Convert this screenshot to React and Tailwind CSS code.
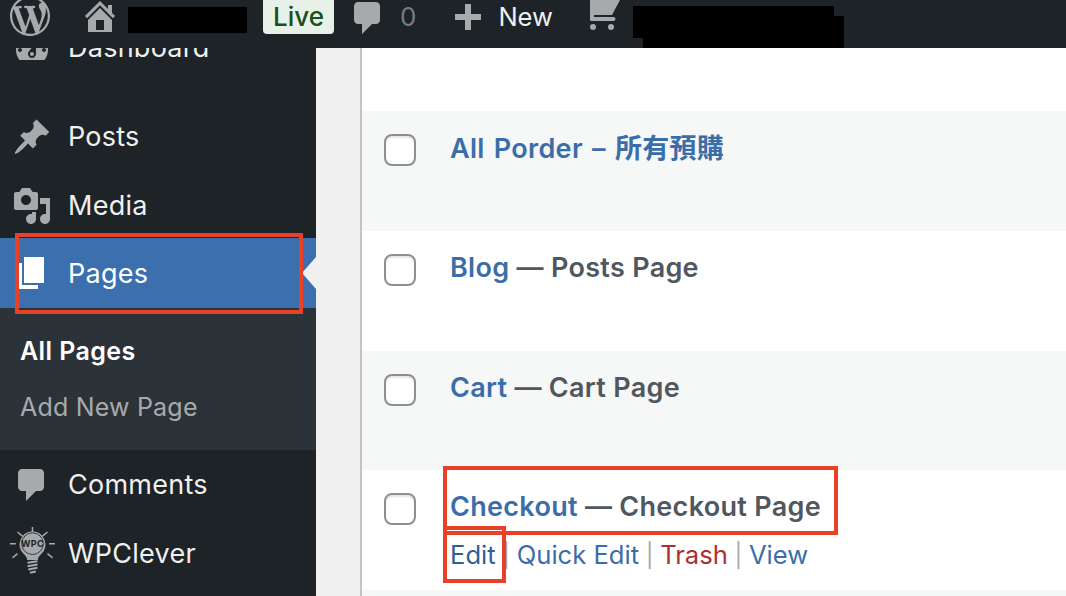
const D = {
  wp: "M20 10c0-5.51-4.49-10-10-10C4.48 0 0 4.49 0 10c0 5.52 4.48 10 10 10 5.51 0 10-4.48 10-10zM7.78 15.37L4.37 6.22c.55-.02 1.17-.08 1.17-.08.5-.06.44-1.13-.06-1.11 0 0-1.45.11-2.37.11-.18 0-.37 0-.58-.01C4.12 2.69 6.87 1.11 10 1.11c2.33 0 4.45.87 6.05 2.34-.68-.11-1.65.39-1.65 1.58 0 .74.45 1.36.9 2.1.35.61.55 1.36.55 2.46 0 1.49-1.4 5-1.4 5l-3.03-8.37c.54-.02.82-.17.82-.17.5-.05.44-1.25-.06-1.22 0 0-1.44.12-2.38.12-.87 0-2.33-.12-2.33-.12-.5-.03-.56 1.2-.06 1.22l.92.08 1.26 3.41zM17.41 10c.24-.64.74-1.87.43-4.25.7 1.29 1.05 2.71 1.05 4.25 0 3.29-1.73 6.24-4.4 7.78.97-2.59 1.94-5.2 2.92-7.78zM6.1 18.09C3.12 16.65 1.11 13.53 1.11 10c0-1.3.23-2.48.72-3.59C3.25 10.3 4.67 14.2 6.1 18.09zm4.03-6.63l2.58 6.98c-.86.29-1.76.45-2.71.45-.79 0-1.57-.11-2.29-.33.81-2.38 1.62-4.74 2.42-7.1z",
  home: "M16 8.5l1.53 1.53-1.06 1.06L10 4.62l-6.47 6.47-1.06-1.06L10 2.5l4 4v-2h2v4zm-6-2.46l6 5.99V18H4v-5.97zM12 17v-5H8v5h4z",
  comment: "M5 2h9c1.1 0 2 .9 2 2v7c0 1.1-.9 2-2 2h-2l-5 5v-5H5c-1.1 0-2-.9-2-2V4c0-1.1.9-2 2-2z",
  plus: "M17 7v3h-5v5H9v-5H4V7h5V2h3v5h5z",
  pin: "M10.44 3.02l1.82-1.82 6.36 6.35-1.83 1.82c-1.05-.68-2.48-.57-3.41.36l-.75.75c-.92.93-1.04 2.35-.35 3.41l-1.83 1.82-2.41-2.41-2.8 2.79c-.42.42-3.38 2.71-3.8 2.29s1.86-3.39 2.28-3.81l2.79-2.79L4.1 9.36l1.83-1.82c1.05.69 2.48.57 3.4-.36l.75-.75c.93-.92 1.05-2.35.36-3.41z",
  media: "M13 11V4c0-.55-.45-1-1-1h-1.67L9 1H5L3.67 3H2c-.55 0-1 .45-1 1v7c0 .55.45 1 1 1h10c.55 0 1-.45 1-1zM7 4.5c1.38 0 2.5 1.12 2.5 2.5S8.38 9.5 7 9.5 4.5 8.38 4.5 7 5.62 4.5 7 4.5zM14 6h5v10.5c0 1.38-1.12 2.5-2.5 2.5S14 17.88 14 16.5s1.12-2.5 2.5-2.5c.17 0 .34.02.5.05V9h-3V6zm-4 8.05V13h2v3.5c0 1.38-1.12 2.5-2.5 2.5S7 17.88 7 16.5 8.12 14 9.5 14c.17 0 .34.02.5.05z",
  page: "M6 15V2h10v13H6zm-1 1h8v2H3V5h2v11z",
  dash: "M3.76 16h12.48c1.1-1.37 1.76-3.11 1.76-5 0-4.42-3.58-8-8-8s-8 3.58-8 8c0 1.89.66 3.63 1.76 5zM10 4c.55 0 1 .45 1 1s-.45 1-1 1-1-.45-1-1 .45-1 1-1zM6 6c.55 0 1 .45 1 1s-.45 1-1 1-1-.45-1-1 .45-1 1-1zm8 0c.55 0 1 .45 1 1s-.45 1-1 1-1-.45-1-1 .45-1 1-1zm-5.37 5.55L12 7v6c0 1.1-.9 2-2 2s-2-.9-2-2c0-.57.24-1.08.63-1.45zM4 10c.55 0 1 .45 1 1s-.45 1-1 1-1-.45-1-1 .45-1 1-1zm12 0c.55 0 1 .45 1 1s-.45 1-1 1-1-.45-1-1 .45-1 1-1zm-5 3c0-.55-.45-1-1-1s-1 .45-1 1 .45 1 1 1 1-.45 1-1z",
};

const Icon = ({ d, className = "" }) => (
  <svg viewBox="0 0 20 20" fill="currentColor" fillRule="evenodd" className={`w-10 h-10 shrink-0 ${className}`}>
    <path d={d} />
  </svg>
);

const Bulb = () => (
  <svg viewBox="0 0 54 60" className="w-[45px] h-[50px] shrink-0 text-[#a7aaad]" fill="none" stroke="currentColor">
    <g strokeWidth="1.8">
      <path d="M27 0v7M9 6l6 5M45 6l-6 5M0 20h7M47 20h7M3 37l6-5M51 37l-6-5" />
    </g>
    <path d="M27 5a16 16 0 0 1 10.500 27.500c-2 2-4 4-4 7H20.500c0-3-2-5-4-7A16 16 0 0 1 27 5z" fill="currentColor" stroke="none" />
    <circle cx="27" cy="20" r="13" stroke="#1d2327" strokeWidth="1" />
    <text x="27" y="24" textAnchor="middle" fontSize="11" fontWeight="700" fill="#1d2327" stroke="none" fontFamily="Inter, sans-serif">WPC</text>
    <path d="M21 43l12-2M21 47l12-2M22 51l11-2M24 55l7-1.500" strokeWidth="2.400" />
  </svg>
);

const Outline = ({ className }) => (
  <div className={`absolute border-4 border-[#e8412a] pointer-events-none ${className}`} />
);

const NavItem = ({ label, children, className = "" }) => (
  <div className={`flex items-center h-[69px] text-[27px] tracking-[0.25px] text-[#f0f0f1] ${className}`}>
    <div className="w-[68px] shrink-0 flex pl-3">{children}</div>
    <span className="mt-[2px]">{label}</span>
  </div>
);

const Sep = () => <span className="text-[#a7aaad] text-[23.5px]"> | </span>;

const Row = ({ alt, link, suffix, actions, className = "", titleClass = "" }) => (
  <div className={`flex pl-[22px] pt-6 ${alt ? "bg-[#f6f7f7]" : "bg-white"} ${className}`}>
    <div className="-mt-px w-8 h-8 shrink-0 rounded-lg border-2 border-[#8c8f94] bg-white shadow-[inset_0_2px_2px_rgba(0,0,0,0.1)]" />
    <div className="ml-[34px] leading-[26px]">
      <div className={`font-semibold text-[27px] tracking-[0.3px] text-[#3b6ea8] ${titleClass}`}>
        {link}
        {suffix && <span className="text-[#50575e]"> — {suffix}</span>}
      </div>
      {actions && (
        <div className="mt-[22px] text-[25.6px] text-[#3b6ea8] whitespace-pre">
          <span className="text-[#2f5f96]">Edit</span>
          <Sep />Quick Edit
          <Sep />
          <span className="text-[#a83232]">Trash</span>
          <Sep />View
        </div>
      )}
    </div>
  </div>
);

export default function App() {
  return (
    <div className="relative w-[1066px] h-[596px] overflow-hidden bg-[#f0f0f1] font-['Inter','Noto_Sans_CJK_TC',sans-serif]">
      <header className="relative z-10 h-12 bg-[#1d2327] flex items-start overflow-hidden text-[#a7aaad]">
        <Icon d={D.wp} className="ml-[10px] -mt-1" />
        <Icon d={D.home} className="ml-[30px] -mt-1" />
        <div className="ml-[8px] mt-[7px] w-[119px] h-[26px] bg-black shrink-0" />
        <div className="ml-4 w-[71px] h-[34px] rounded-b bg-[#e7f1e8] text-[#1c4d1c] text-[26px] leading-[34px] text-center font-medium shrink-0">Live</div>
        <Icon d={D.comment} className="ml-[14px] -mt-0.5" />
        <span className="ml-[12px] mt-[3px] text-[26px] leading-[28px] text-[#787c82]">0</span>
        <Icon d={D.plus} className="ml-[31px]" />
        <span className="ml-[11px] mt-[3px] text-[25.5px] leading-[28px] text-[#f0f0f1]">New</span>
        <svg viewBox="0 0 40 40" fill="currentColor" className="w-10 h-10 shrink-0 ml-[27px]">
          <path d="M10 0H40L32 15H14V17H33.500a2 2 0 0 1 0 4H11.500a1.500 1.500 0 0 1-1.500-1.500Z" />
          <circle cx="13" cy="27" r="3" />
          <circle cx="31" cy="27" r="3" />
        </svg>
        <div className="relative ml-[13px] mt-[6px] w-[201px] h-8 bg-black shrink-0">
          <div className="absolute left-[10px] top-[10px] w-[201px] h-8 bg-black" />
        </div>
      </header>

      <div className="flex h-[548px]">
        <aside className="w-[316px] shrink-0 bg-[#1d2327] overflow-hidden">
          <NavItem label="Dashboard" className="-mt-[35px] mb-[20px]">
            <Icon d={D.dash} className="text-[#a7aaad]" />
          </NavItem>
          <NavItem label="Posts"><Icon d={D.pin} className="text-[#a7aaad]" /></NavItem>
          <NavItem label="Media"><Icon d={D.media} className="text-[#a7aaad]" /></NavItem>
          <div className="relative flex items-center h-[70px] -mt-[2px] bg-[#3b6fad] text-[27px] tracking-[0.25px] text-white">
            <div className="w-[68px] shrink-0 flex pl-3"><Icon d={D.page} className="text-white" /></div>
            <span className="mt-[2px]">Pages</span>
            <div className="absolute right-0 top-1/2 -translate-y-1/2 border-y-[16px] border-y-transparent border-r-[14px] border-r-[#f0f0f1]" />
          </div>
          <div className="h-[142px] bg-[#2c3338] pl-[20px] pt-[25px] text-[25px]">
            <div className="h-[36px] leading-[36px] font-semibold tracking-[0.4px] text-white">All Pages</div>
            <div className="mt-5 h-[36px] leading-[36px] tracking-[0.2px] text-[#a7aaad]">Add New Page</div>
          </div>
          <NavItem label="Comments"><Icon d={D.comment} className="text-[#a7aaad]" /></NavItem>
          <div className="flex h-[69px] text-[27px] tracking-[0.25px] text-[#f0f0f1]">
            <div className="w-[68px] shrink-0 pl-[10px] pt-[8px]"><Bulb /></div>
            <span className="self-center mt-[2px]">WPClever</span>
          </div>
        </aside>

        <div className="w-[44px] shrink-0" />

        <main className="flex-1 min-w-0 border-l-2 border-[#c3c4c7] flex flex-col">
          <div className="h-[63px] bg-white shrink-0" />
          <Row alt link="All Porder – 所有預購" titleClass="mt-px [word-spacing:2px]" className="h-[120px]" />
          <Row link="Blog" suffix="Posts Page" className="h-[120px]" />
          <Row alt link="Cart" suffix="Cart Page" className="h-[119px]" />
          <Row link="Checkout" suffix="Checkout Page" actions className="h-[120px]" />
          <div className="flex-1 bg-[#f6f7f7]" />
        </main>
      </div>

      <Outline className="left-[15px] top-[233px] w-[288px] h-[81px]" />
      <Outline className="left-[443px] top-[466px] w-[395px] h-[69px]" />
      <Outline className="left-[443px] top-[526px] w-[63px] h-[57px]" />
    </div>
  );
}
